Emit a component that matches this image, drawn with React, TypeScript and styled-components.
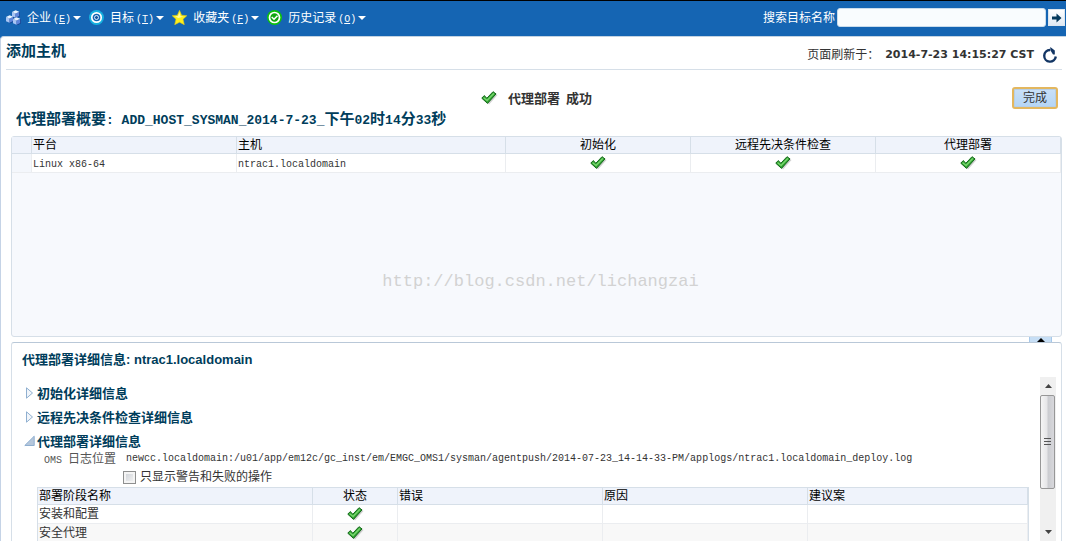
import React from "react";
import styled, { createGlobalStyle, css } from "styled-components";

const cjk = `"Noto Sans CJK SC", sans-serif`;
const ink = "#003d5b";
const line = "#d6dfe8";

const GlobalStyle = createGlobalStyle`
  *, *::before, *::after { box-sizing: border-box; }
  body {
    margin: 0;
    background: #1565b3;
    color: #333;
    font: 12px/18px "Liberation Sans", ${cjk};
    overflow: hidden;
  }
  button, input { font: inherit; }
  h1, h2, h3, p, ul { margin: 0; padding: 0; }
`;

const Page = styled.div`
  display: flex;
  flex-direction: column;
  height: 100vh;
  border-top: 1px solid #000;
`;

const TopBar = styled.header`
  display: flex;
  align-items: center;
  justify-content: space-between;
  height: 35px;
  flex: none;
  padding: 0 1px 2px 6px;
  background: #1565b3;
  color: #fff;
`;

const Menu = styled.ul`
  display: flex;
  gap: 8px;
  list-style: none;
`;

const MenuButton = styled.button`
  display: flex;
  align-items: center;
  padding: 0;
  border: 0;
  background: none;
  color: inherit;
  line-height: 18px;
  svg:first-child { margin-right: 6px; }
  svg:last-child { margin-left: 2px; }
`;

const Mono = styled.span`
  font-family: "Liberation Mono", monospace;
  font-size: 10px;
  line-height: 10px;
`;

const MenuKey = styled(Mono)`
  margin-left: 2px;
`;

const HeadingMono = styled(Mono)`
  font-size: 13px;
`;

const Search = styled.form`
  display: flex;
  align-items: center;
  gap: 2px;
`;

const SearchInput = styled.input`
  width: 209px;
  height: 19px;
  padding: 0 4px;
  border: 1px solid #c9dcec;
  border-radius: 3px;
  background: #f9fcfe;
  outline: none;
`;

const GoButton = styled.button`
  display: flex;
  align-items: center;
  justify-content: center;
  width: 17px;
  height: 17px;
  padding: 0;
  border: 1px solid #dce6ef;
  background: linear-gradient(#fff, #dfe9f4);
`;

const Content = styled.main`
  display: flex;
  flex-direction: column;
  flex: 1;
  min-height: 0;
  padding: 0 4px 0 0;
  border-left: 1px solid #c5d3e6;
  border-top: 1px solid #c3d3e2;
  border-radius: 4px 0 0 0;
  background: #fff;
`;

const TitleRow = styled.div`
  display: flex;
  justify-content: space-between;
  height: 33px;
  flex: none;
  margin-left: 5px;
  padding-right: 4px;
  border-bottom: 1px solid ${line};
`;

const PageTitle = styled.h1`
  padding-top: 2px;
  font: bold 15px/22px ${cjk};
  color: ${ink};
`;

const Refreshed = styled.div`
  display: flex;
  align-items: center;
  padding-top: 3px;
  time {
    font: bold 11px/18px "DejaVu Sans", sans-serif;
    margin: 0 8px 0 6px;
  }
`;

const IconButton = styled.button`
  display: flex;
  padding: 0;
  border: 0;
  background: none;
`;

const StatusRow = styled.div`
  display: grid;
  grid-template-columns: 1fr auto 1fr;
  align-items: center;
  flex: none;
  padding: 17px 4px 0 10px;
  height: 39px;
`;

const Status = styled.div`
  display: flex;
  align-items: center;
  gap: 10px;
  grid-column: 2;
  padding-left: 4px;
  font: bold 13px/18px ${cjk};
  white-space: pre;
`;

const DoneButton = styled.button`
  justify-self: end;
  width: 46px;
  height: 22px;
  padding: 0;
  border: 2px solid #e3b75f;
  border-radius: 3px;
  background: linear-gradient(#c9e0f8, #b4d5f5);
  box-shadow: inset 0 0 0 1px #b5cfe8;
  color: #333;
  line-height: 16px;
`;

const SummaryTitle = styled.h2`
  flex: none;
  padding-left: 15px;
  height: 27px;
  font: bold 15px/18px ${cjk};
  color: ${ink};
`;

const SummaryPanel = styled.section`
  display: flex;
  flex-direction: column;
  flex: none;
  height: 201px;
  margin-left: 10px;
  border: 1px solid ${line};
  border-radius: 3px;
  background: #f7f9fd;
`;

const Watermark = styled.p`
  padding: 97px 0 0 8px;
  text-align: center;
  font: 17px/24px "Liberation Mono", monospace;
  color: #d2d2d2;
`;

const Table = styled.table`
  width: 100%;
  table-layout: fixed;
  border-collapse: separate;
  border-spacing: 0;
  color: #333;
`;

const cell = css<{ $center?: boolean }>`
  padding: 0 1px;
  font-weight: normal;
  text-align: ${(p) => (p.$center ? "center" : "left")};
  white-space: nowrap;
  svg { display: block; margin: 0 auto; }
`;

const Th = styled.th<{ $center?: boolean; $w?: number }>`
  ${cell}
  width: ${(p) => (p.$w ? `${p.$w}px` : "auto")};
  height: 17px;
  line-height: 16px;
  color: #000;
  background: #eff3fb;
  border-right: 1px solid ${line};
  border-bottom: 1px solid ${line};
`;

const Td = styled.td<{ $center?: boolean; $bg?: string }>`
  ${cell}
  height: 19px;
  line-height: 18px;
  background: ${(p) => p.$bg ?? "#fff"};
  border-right: 1px solid #ebedf0;
  border-bottom: 1px solid #ebedf0;
`;

const Splitter = styled.div`
  display: flex;
  justify-content: flex-end;
  height: 5px;
  flex: none;
  padding-right: 10px;
`;

const CollapseButton = styled.button`
  display: flex;
  align-items: center;
  justify-content: center;
  width: 23px;
  height: 5px;
  padding: 0;
  border: 1px solid #a6c8ea;
  border-width: 0 1px;
  background: #c6def5;
`;

const DetailPanel = styled.section`
  display: flex;
  flex-direction: column;
  flex: 1;
  min-height: 0;
  margin-left: 10px;
  border: 1px solid ${line};
  border-top-color: #b9c8d8;
  border-bottom: 0;
  border-radius: 3px 3px 0 0;
`;

const DetailTitle = styled.h2`
  flex: none;
  height: 34px;
  padding: 8px 10px 0;
  font: bold 13px/18px "Liberation Sans", ${cjk};
  color: ${ink};
`;

const DetailBody = styled.div`
  display: flex;
  flex: 1;
  min-height: 0;
  padding-right: 5px;
`;

const DetailScroll = styled.div`
  flex: 1;
  min-width: 0;
  overflow: hidden;
  padding: 4px 11px 0 12px;
`;

const Disclosure = styled.button`
  display: flex;
  align-items: center;
  gap: 2px;
  height: 24px;
  padding: 0;
  border: 0;
  background: none;
  color: ${ink};
  font: bold 13px/24px ${cjk};
`;

const LogRow = styled.p`
  display: flex;
  align-items: center;
  gap: 10px;
  padding-left: 20px;
  height: 16px;
  line-height: 16px;
  margin-top: -2px;
  white-space: pre;
`;

const LogLabel = styled.span`
  color: #555;
`;

const FilterLabel = styled.label`
  display: flex;
  align-items: center;
  gap: 4px;
  height: 20px;
  padding: 0 0 0 99px;
`;

const Checkbox = styled.input`
  appearance: none;
  width: 13px;
  height: 13px;
  margin: 0;
  border: 1px solid #8e8f8f;
  background: linear-gradient(135deg, #cbcfd5, #f6f6f6);
  box-shadow: inset 0 0 0 2px #f4f4f4;
`;

const StepsFrame = styled.div`
  margin-left: 13px;
  border: 1px solid ${line};
  border-bottom: 0;
`;

const ScrollTrack = styled.div`
  display: flex;
  flex-direction: column;
  width: 16px;
  background: #f0f0f0;
`;

const ScrollArrow = styled.button`
  display: flex;
  align-items: center;
  justify-content: center;
  width: 16px;
  height: 18px;
  padding: 0;
  border: 0;
  background: none;
`;

const ScrollThumb = styled.div`
  display: flex;
  align-items: center;
  justify-content: center;
  width: 15px;
  height: 94px;
  margin-bottom: auto;
  border: 1px solid #979797;
  border-radius: 2px;
  background: linear-gradient(90deg, #f5f5f5, #e6e6e8 45%, #cbccd0 55%, #d8d8dc);
`;

const Check = () => (
  <svg width="17" height="14" viewBox="0 0 17 14" aria-label="成功">
    <path d="M2.5 8.5 L5 6.5 L7.5 9 L13.5 2 L16.5 4 L8 13.5 Z" fill="#999" opacity=".45" />
    <path d="M.8 7.2 L3.2 4.6 L5.9 7.2 L12 .7 L15 2.9 L6.5 12.4 Z" fill="#35a435" stroke="#14691b" strokeLinejoin="round" />
    <path d="M2.6 6.6 L6.1 9.4 L12.9 2.4" fill="none" stroke="#7fdc74" strokeWidth="1.2" />
  </svg>
);

const Triangle = ({ up, w, h, color }: { up?: boolean; w: number; h: number; color: string }) => (
  <svg width={w} height={h} viewBox="0 0 8 4" preserveAspectRatio="none" aria-hidden="true">
    <path d={up ? "M0 4h8L4 0z" : "M0 0h8L4 4z"} fill={color} />
  </svg>
);

const cubes = [
  [6, 0],
  [0, 5],
  [7, 7],
];

const CubesIcon = () => (
  <svg width="15" height="15" viewBox="0 0 15 15" aria-hidden="true">
    {cubes.map(([x, y]) => (
      <g key={y} transform={`translate(${x} ${y})`}>
        <path d="M1 4l3 4.4 4-2.2V2z" fill="#123f8c" />
        <path d="M0 2l3.6 1.4v4.4L0 6.2z" fill="#a9c5f4" />
        <path d="M3.6 3.4l3.6-1.6V6L3.6 7.8z" fill="#5f86dc" />
        <path d="M0 2L3.6 .2l3.6 1.6-3.6 1.6z" fill="#eaf3ff" />
      </g>
    ))}
  </svg>
);

const TargetIcon = () => (
  <svg width="15" height="15" viewBox="0 0 15 15" aria-hidden="true">
    <circle cx="7.5" cy="7.5" r="7.5" fill="#16b1e0" />
    <circle cx="7.5" cy="7.5" r="4.7" fill="#1565b3" stroke="#fff" strokeWidth="1.7" />
    <circle cx="7.5" cy="7.5" r="2" fill="#17549c" stroke="#d8efff" />
  </svg>
);

const StarIcon = () => (
  <svg width="15" height="15" viewBox="0 0 15 15" aria-hidden="true">
    <path d="M7.5 .3l2.1 4.9 5.2.5-3.8 3.5 1.3 5.5-4.8-2.5-4.8 2.5L4 9.2.2 5.7l5.2-.5z" fill="#fdf01c" stroke="#e2c91a" strokeWidth=".6" />
    <path d="M7.3 2.5l1.2 3.7 3 .4-5 1.4-3.5-1.6 3.1-.3z" fill="#fffba0" />
  </svg>
);

const HistoryIcon = () => (
  <svg width="15" height="15" viewBox="0 0 15 15" aria-hidden="true">
    <circle cx="7.5" cy="7.5" r="7.5" fill="#0cc20c" />
    <circle cx="7.5" cy="7.5" r="5" fill="#10a510" stroke="#fff" strokeWidth="1.7" />
    <path d="M4.7 7l2.3 2.3 3.5-3.6" fill="none" stroke="#fff" strokeWidth="1.5" />
  </svg>
);

const RefreshIcon = () => (
  <svg width="16" height="16" viewBox="0 0 16 16" aria-hidden="true">
    <path d="M8 3A5.8 5.8 0 1 0 13.8 9.5" fill="none" stroke="#123564" strokeWidth="2.4" />
    <path d="M8.3 0v3.2L11 7.5h1.8V3.6z" fill="#123564" />
  </svg>
);

const menus = [
  { name: "企业", key: "E", icon: <CubesIcon /> },
  { name: "目标", key: "T", icon: <TargetIcon /> },
  { name: "收藏夹", key: "F", icon: <StarIcon /> },
  { name: "历史记录", key: "O", icon: <HistoryIcon /> },
];

const collapsed = ["初始化详细信息", "远程先决条件检查详细信息"];
const steps = ["安装和配置", "安全代理"];

export default function App() {
  return (
    <Page>
      <GlobalStyle />
      <TopBar>
        <nav>
          <Menu>
            {menus.map((m) => (
              <li key={m.key}>
                <MenuButton type="button">
                  {m.icon}
                  <span>
                    {m.name}
                    <MenuKey>
                      (<u>{m.key}</u>)
                    </MenuKey>
                  </span>
                  <Triangle w={8} h={4} color="#fff" />
                </MenuButton>
              </li>
            ))}
          </Menu>
        </nav>
        <Search onSubmit={(e) => e.preventDefault()}>
          <label htmlFor="target">搜索目标名称</label>
          <SearchInput id="target" type="text" />
          <GoButton type="submit" aria-label="搜索">
            <svg width="11" height="10" viewBox="0 0 11 10" aria-hidden="true">
              <path d="M1 3.5h4.5V.5L10.5 5l-5 4.5v-3H1z" fill="#063a5c" />
            </svg>
          </GoButton>
        </Search>
      </TopBar>
      <Content>
        <TitleRow>
          <PageTitle>添加主机</PageTitle>
          <Refreshed>
            <span>页面刷新于：</span>
            <time dateTime="2014-07-23T14:15:27+08:00">2014-7-23 14:15:27 CST</time>
            <IconButton type="button" aria-label="刷新">
              <RefreshIcon />
            </IconButton>
          </Refreshed>
        </TitleRow>
        <StatusRow>
          <Status>
            <Check />
            <span>代理部署  成功</span>
          </Status>
          <DoneButton type="button">完成</DoneButton>
        </StatusRow>
        <SummaryTitle>
          代理部署概要<HeadingMono>: ADD_HOST_SYSMAN_2014-7-23_</HeadingMono>下午
          <HeadingMono>02</HeadingMono>时<HeadingMono>14</HeadingMono>分<HeadingMono>33</HeadingMono>秒
        </SummaryTitle>
        <SummaryPanel>
          <Table>
            <thead>
              <tr>
                <Th $w={20} />
                <Th $w={205}>平台</Th>
                <Th>主机</Th>
                <Th $w={185} $center>初始化</Th>
                <Th $w={185} $center>远程先决条件检查</Th>
                <Th $w={185} $center>代理部署</Th>
              </tr>
            </thead>
            <tbody>
              <tr>
                <Td $bg="#f4f7fc" />
                <Td><Mono>Linux x86-64</Mono></Td>
                <Td><Mono>ntrac1.localdomain</Mono></Td>
                <Td $center><Check /></Td>
                <Td $center><Check /></Td>
                <Td $center><Check /></Td>
              </tr>
            </tbody>
          </Table>
          <Watermark>http://blog.csdn.net/lichangzai</Watermark>
        </SummaryPanel>
        <Splitter>
          <CollapseButton type="button" aria-label="折叠">
            <Triangle up w={8} h={4} color="#000" />
          </CollapseButton>
        </Splitter>
        <DetailPanel>
          <DetailTitle>代理部署详细信息: ntrac1.localdomain</DetailTitle>
          <DetailBody>
            <DetailScroll>
              {collapsed.map((name) => (
                <Disclosure key={name} type="button" aria-expanded="false">
                  <svg width="11" height="12" viewBox="0 0 11 12" aria-hidden="true">
                    <path d="M2.5 .8v10.4L8.5 6z" fill="#f1f5fa" stroke="#8fafd0" />
                  </svg>
                  {name}
                </Disclosure>
              ))}
              <Disclosure type="button" aria-expanded="true">
                <svg width="11" height="12" viewBox="0 0 11 12" aria-hidden="true">
                  <path d="M.8 10.5h9.4V1.2z" fill="#b5c7dc" stroke="#8fafd0" />
                </svg>
                代理部署详细信息
              </Disclosure>
              <LogRow>
                <LogLabel><Mono>OMS </Mono>日志位置</LogLabel>
                <Mono>newcc.localdomain:/u01/app/em12c/gc_inst/em/EMGC_OMS1/sysman/agentpush/2014-07-23_14-14-33-PM/applogs/ntrac1.localdomain_deploy.log</Mono>
              </LogRow>
              <FilterLabel>
                <Checkbox type="checkbox" />
                只显示警告和失败的操作
              </FilterLabel>
              <StepsFrame>
                <Table>
                  <thead>
                    <tr>
                      <Th $w={275}>部署阶段名称</Th>
                      <Th $w={85} $center>状态</Th>
                      <Th $w={205}>错误</Th>
                      <Th $w={205}>原因</Th>
                      <Th>建议案</Th>
                    </tr>
                  </thead>
                  <tbody>
                    {steps.map((step, i) => {
                      const bg = i % 2 ? "#f8f8f8" : "#fff";
                      return (
                        <tr key={step}>
                          <Td $bg={bg}>{step}</Td>
                          <Td $bg={bg} $center><Check /></Td>
                          <Td $bg={bg} />
                          <Td $bg={bg} />
                          <Td $bg={bg} />
                        </tr>
                      );
                    })}
                  </tbody>
                </Table>
              </StepsFrame>
            </DetailScroll>
            <ScrollTrack>
              <ScrollArrow type="button" aria-label="向上滚动">
                <Triangle up w={7} h={4} color="#444" />
              </ScrollArrow>
              <ScrollThumb>
                <svg width="7" height="8" viewBox="0 0 7 8" aria-hidden="true">
                  <path d="M0 .5h7M0 3.5h7M0 6.5h7" stroke="#555" />
                </svg>
              </ScrollThumb>
              <ScrollArrow type="button" aria-label="向下滚动">
                <Triangle w={7} h={4} color="#444" />
              </ScrollArrow>
            </ScrollTrack>
          </DetailBody>
        </DetailPanel>
      </Content>
    </Page>
  );
}
